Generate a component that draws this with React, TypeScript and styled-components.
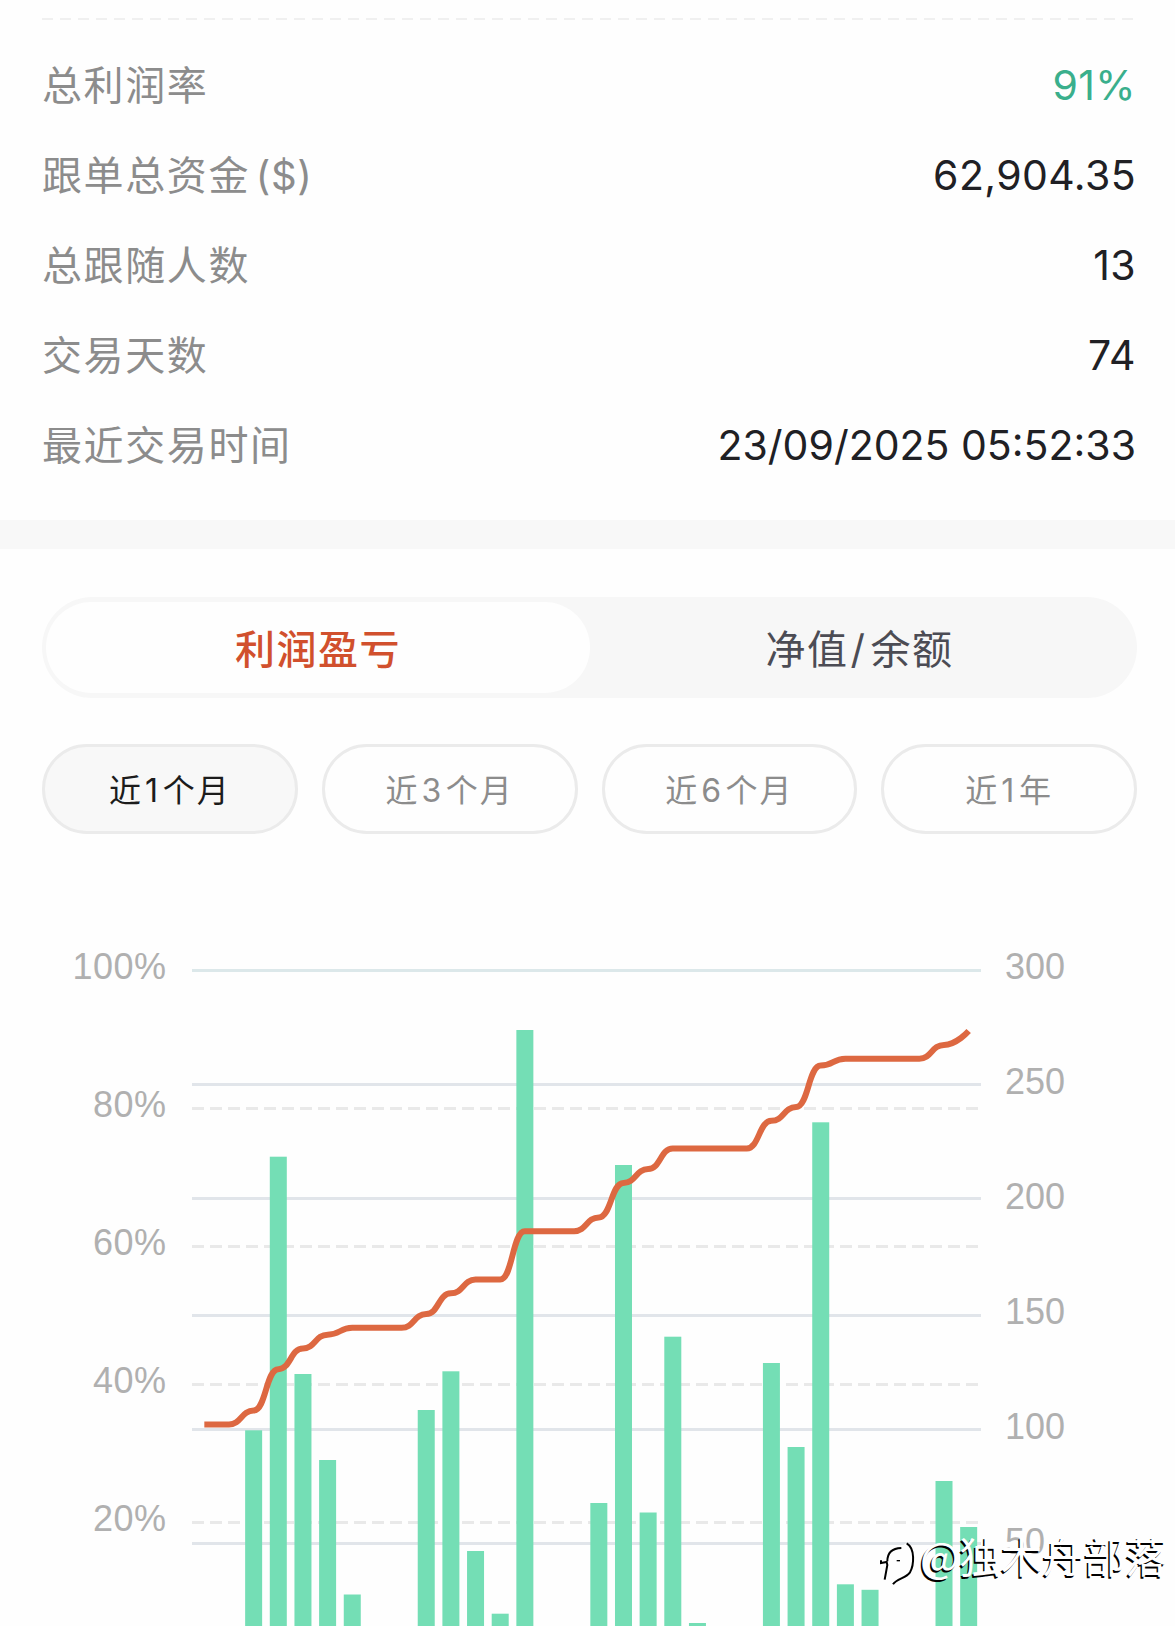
import React from "react";
import styled, { createGlobalStyle } from "styled-components";

const GlobalStyle = createGlobalStyle`
  * { box-sizing: border-box; }
  body { margin: 0; background: #fefefe; }
`;

const cjk = `Inter, "Noto Sans CJK SC", sans-serif`;

const Page = styled.main`
  position: relative;
  width: 1175px;
  height: 1626px;
  overflow: hidden;
  background: #fefefe;
  font-family: ${cjk};
`;

const Summary = styled.section`
  padding: 18px 39px 30px 42px;
`;

const Divider = styled.div`
  height: 2px;
  margin-bottom: 19px;
  background: repeating-linear-gradient(90deg, #f0f0f0 0 11px, transparent 11px 18px);
`;

const StatRow = styled.div`
  display: flex;
  align-items: center;
  justify-content: space-between;
  height: 90px;
`;

const StatLabel = styled.span`
  padding-bottom: 2px;
  font-size: 40px;
  letter-spacing: 1.6px;
  color: #8c8c8c;
`;

const Unit = styled.span`
  letter-spacing: 0.6px;
  word-spacing: -6px;
`;

const StatValue = styled.span<{ $positive?: boolean; $dense?: boolean }>`
  padding-top: 1px;
  font-size: 41px;
  letter-spacing: ${(p) => (p.$dense ? "0" : "0.4px")};
  color: ${(p) => (p.$positive ? "#3aaf8c" : "#202024")};
`;

const Band = styled.div`
  height: 29px;
  margin-top: 1px;
  background: #f8f8f8;
`;

const Segmented = styled.div`
  display: grid;
  grid-template-columns: 544px 1fr;
  height: 101px;
  margin: 48px 38px 0 42px;
  padding: 5px 4px;
  border-radius: 51px;
  background: #f7f7f7;
`;

const Segment = styled.button<{ $active?: boolean }>`
  border: 0;
  padding: 0 0 1px;
  border-radius: 46px;
  background: ${(p) => (p.$active ? "#fefefe" : "transparent")};
  color: ${(p) => (p.$active ? "#d1502d" : "#4c4c54")};
  font-family: inherit;
  font-size: 40px;
  font-weight: ${(p) => (p.$active ? 500 : 400)};
  letter-spacing: 1.5px;
`;

const Slash = styled.span`
  margin: 0 4px 0 2px;
`;

const SegmentText = styled.span`
  margin-right: 4px;
`;

const Ranges = styled.div`
  display: grid;
  grid-template-columns: repeat(4, 1fr);
  gap: 24px;
  margin: 46px 38px 0 42px;
`;

const RangeChip = styled.button<{ $active?: boolean }>`
  height: 90px;
  padding: 0 0 2px;
  border: 3px solid #ebebeb;
  border-radius: 45px;
  background: ${(p) => (p.$active ? "#f8f8f8" : "#fefefe")};
  color: ${(p) => (p.$active ? "#1c1c1c" : "#8c8c8c")};
  font-family: inherit;
  font-size: 32px;
  letter-spacing: 2px;
`;

const Digit = styled.span`
  margin: 0 2.5px 0 2px;
`;

const Chart = styled.svg`
  display: block;
  width: 1175px;
  height: 792px;
`;

const AxisLabel = styled.text`
  font-family: "Liberation Sans", Arial, sans-serif;
  font-size: 36px;
  fill: #b0b0b0;
`;

const PercentLabel = styled(AxisLabel)`
  letter-spacing: 0.5px;
`;

const Watermark = styled.div`
  position: absolute;
  left: 880px;
  top: 1529px;
  display: flex;
  align-items: center;
  height: 60px;
  color: #fff;
  font-family: "Noto Sans CJK SC", sans-serif;
  font-size: 41.5px;
  line-height: 60px;
  white-space: nowrap;
  text-shadow: -1.5px 1.5px 0 #000;
`;

const WatermarkLogo = styled.svg`
  width: 38px;
  height: 50px;
  margin: 13px 2px 0 0;
`;

const WatermarkName = styled.span`
  margin-bottom: 8px;
`;

const stats = [
  { label: "总利润率", value: "91%", positive: true },
  { label: "跟单总资金", unit: " ($)", value: "62,904.35" },
  { label: "总跟随人数", value: "13" },
  { label: "交易天数", value: "74" },
  { label: "最近交易时间", value: "23/09/2025 05:52:33", dense: true },
];

const ranges = [
  { count: 1, unit: "个月" },
  { count: 3, unit: "个月" },
  { count: 6, unit: "个月" },
  { count: 1, unit: "年" },
];

const LEFT = 192;
const RIGHT = 981;
const STEP = (RIGHT - LEFT) / 32;
const centre = (i: number) => LEFT + STEP * (i + 0.5);

const solidLines = [970.5, 1084.5, 1198.5, 1315.5, 1429.5, 1543.5];
const dashedLines = [1108.5, 1246.5, 1384.5, 1522.5];

const bars: [number, number][] = [
  [2, 1430.3], [3, 1156.7], [4, 1374], [5, 1460], [6, 1594.5], [9, 1410], [10, 1371.3],
  [11, 1551], [12, 1613.7], [13, 1030], [16, 1503], [17, 1165], [18, 1512.5], [19, 1336.7],
  [20, 1623], [23, 1363], [24, 1447], [25, 1122.3], [26, 1584.3], [27, 1589.8], [30, 1481], [31, 1527],
];

const rates = [
  34, 34, 36, 42, 45, 47, 48, 48, 48, 50, 53, 55, 55, 62, 62, 62,
  64, 69, 71, 74, 74, 74, 74, 78, 80, 86, 87, 87, 87, 87, 89, 91,
];

const rateY = (v: number) => 1659 - 6.9 * v;

const linePath = rates
  .map((v, i) => {
    const x = centre(i);
    const y = rateY(v);
    if (i === 0) return `M${x} ${y}`;
    const end = i === rates.length - 1 ? x : x - STEP / 2;
    return `C${centre(i - 1) + STEP / 2} ${rateY(rates[i - 1])} ${end} ${y} ${x} ${y}`;
  })
  .join("");

export default function App() {
  return (
    <Page>
      <GlobalStyle />
      <Summary>
        <Divider />
        {stats.map((s) => (
          <StatRow key={s.label}>
            <StatLabel>
              {s.label}
              {s.unit && <Unit>{s.unit}</Unit>}
            </StatLabel>
            <StatValue $positive={s.positive} $dense={s.dense}>{s.value}</StatValue>
          </StatRow>
        ))}
      </Summary>
      <Band />
      <Segmented>
        <Segment $active>利润盈亏</Segment>
        <Segment>
          <SegmentText>净值<Slash>/</Slash>余额</SegmentText>
        </Segment>
      </Segmented>
      <Ranges>
        {ranges.map((r, i) => (
          <RangeChip key={i} $active={i === 0}>
            近<Digit>{r.count}</Digit>{r.unit}
          </RangeChip>
        ))}
      </Ranges>
      <Chart viewBox="0 834 1175 792">
        {solidLines.map((y, i) => (
          <line key={y} x1={LEFT} x2={RIGHT} y1={y} y2={y} stroke={i === 0 ? "#dce8ea" : "#e1e5ea"} strokeWidth={3} />
        ))}
        {dashedLines.map((y) => (
          <line key={y} x1={LEFT} x2={RIGHT - 2} y1={y} y2={y} stroke="#e9e9e9" strokeWidth={3} strokeDasharray="12 6" />
        ))}
        {bars.map(([i, top]) => (
          <rect key={i} x={centre(i) - 8.5} y={top} width={17} height={1660 - top} fill="#74deb5" />
        ))}
        <path d={linePath} fill="none" stroke="#dd6841" strokeWidth={6} strokeLinejoin="round" />
        {[100, 80, 60, 40, 20].map((v, i) => (
          <PercentLabel key={v} x={166.5} y={978.5 + i * 138} textAnchor="end">{v}%</PercentLabel>
        ))}
        {[300, 250, 200, 150, 100, 50].map((v, i) => (
          <AxisLabel key={v} x={1005} y={978.5 + i * 115}>{v}</AxisLabel>
        ))}
      </Chart>
      <Watermark>
        <WatermarkLogo viewBox="24 36 114 150" fill="none">
          <path d="M46 98Q44 62 84 54L104 42Q130 62 122 110Q112 146 66 160L46 150Z" fill="#fefefe" />
          <path d="M38 152L46 108L44 99L27 102V94M46 97C46 70 62 58 88 57" stroke="#000" strokeWidth={6} />
          <path d="M104 43C130 58 126 108 114 130C102 148 74 148 63 166" stroke="#000" strokeWidth={6} />
          <path d="M74 95H84" stroke="#000" strokeWidth={4} />
        </WatermarkLogo>
        <WatermarkName>@独木舟部落</WatermarkName>
      </Watermark>
    </Page>
  );
}
